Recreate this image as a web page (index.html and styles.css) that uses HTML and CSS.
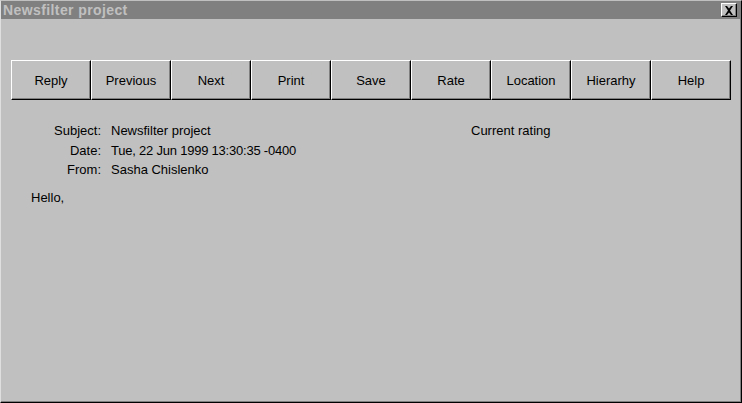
FILE: index.html
```html
<!DOCTYPE html>
<html>
<head>
<meta charset="utf-8">
<link rel="stylesheet" href="styles.css">
</head>
<body>
<div class="window">
  <div class="titlebar">
    <span class="title">Newsfilter project</span>
    <span class="close"><svg width="10" height="9" viewBox="0 0 10 9"><path d="M1 0h2l2 2.5L7 0h2L6 4.5 9 9H7L5 6.5 3 9H1l3-4.5z" fill="#000"/></svg></span>
  </div>
  <div class="toolbar">
    <button class="btn">Reply</button>
    <button class="btn">Previous</button>
    <button class="btn">Next</button>
    <button class="btn">Print</button>
    <button class="btn">Save</button>
    <button class="btn">Rate</button>
    <button class="btn">Location</button>
    <button class="btn">Hierarhy</button>
    <button class="btn">Help</button>
  </div>
  <div class="headers">
    <div class="fields">
      <div class="label">Subject:</div><div class="value">Newsfilter project</div>
      <div class="label">Date:</div><div class="value date">Tue, 22 Jun 1999 13:30:35 -0400</div>
      <div class="label">From:</div><div class="value">Sasha Chislenko</div>
    </div>
    <div class="rating">Current rating</div>
  </div>
  <div class="body">Hello,</div>
</div>
</body>
</html>
```
FILE: styles.css
```css
html, body {
  margin: 0;
  padding: 0;
}
body {
  width: 742px;
  height: 403px;
  background: #c0c0c0;
  font-family: "Liberation Sans", Arial, sans-serif;
  font-size: 13px;
  color: #000;
  overflow: hidden;
}
.window {
  box-sizing: border-box;
  width: 742px;
  height: 403px;
  background: #c0c0c0;
  border-left: 1px solid #dfdfdf;
  border-top: 1px solid #c0c0c0;
  border-right: 1px solid #000;
  border-bottom: 1px solid #000;
  box-shadow: inset -1px -1px 0 #808080;
}
.titlebar {
  height: 18px;
  background: #808080;
  display: flex;
  align-items: center;
  justify-content: space-between;
  padding: 0 4px 0 2px;
}
.title {
  color: #c0c0c0;
  font-weight: bold;
  font-size: 14px;
  letter-spacing: 0.4px;
}
.close {
  box-sizing: border-box;
  width: 16px;
  height: 14px;
  background: #c0c0c0;
  border-top: 1px solid #fff;
  border-left: 1px solid #fff;
  border-right: 1px solid #000;
  border-bottom: 1px solid #000;
  box-shadow: inset -1px -1px 0 #808080;
  display: flex;
  align-items: center;
  justify-content: center;
}
.toolbar {
  display: flex;
  padding: 41px 0 0 10px;
}
.btn {
  box-sizing: border-box;
  width: 80px;
  height: 40px;
  margin: 0;
  padding: 0;
  background: #c0c0c0;
  border-top: 1px solid #fff;
  border-left: 1px solid #fff;
  border-right: 1px solid #000;
  border-bottom: 1px solid #000;
  box-shadow: inset -1px -1px 0 #808080;
  font-family: "Liberation Sans", Arial, sans-serif;
  font-size: 13px;
  color: #000;
}
.headers {
  display: flex;
  padding-top: 23px;
}
.fields {
  display: grid;
  grid-template-columns: 100px auto;
  column-gap: 10px;
  row-gap: 3.5px;
  line-height: 16px;
  width: 470px;
  align-content: start;
}
.label {
  text-align: right;
}
.date {
  letter-spacing: -0.22px;
}
.rating {
  line-height: 16px;
}
.body {
  padding: 12px 0 0 30px;
  line-height: 16px;
}
```
